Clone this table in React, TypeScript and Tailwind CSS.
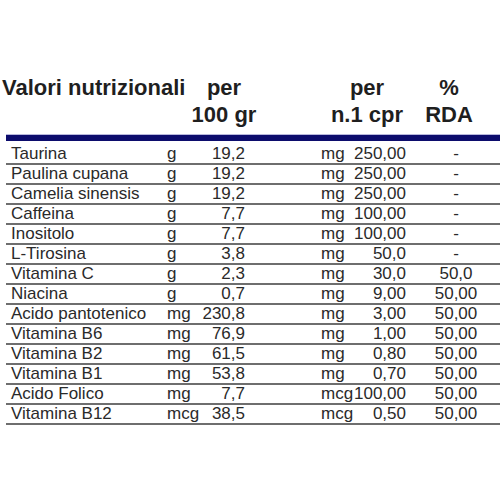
import React from "react";

type Row = [string, string, string, string, string, string];

const rows: Row[] = [
  ["Taurina", "g", "19,2", "mg", "250,00", "-"],
  ["Paulina cupana", "g", "19,2", "mg", "250,00", "-"],
  ["Camelia sinensis", "g", "19,2", "mg", "250,00", "-"],
  ["Caffeina", "g", "7,7", "mg", "100,00", "-"],
  ["Inositolo", "g", "7,7", "mg", "100,00", "-"],
  ["L-Tirosina", "g", "3,8", "mg", "50,0", "-"],
  ["Vitamina C", "g", "2,3", "mg", "30,0", "50,0"],
  ["Niacina", "g", "0,7", "mg", "9,00", "50,00"],
  ["Acido pantotenico", "mg", "230,8", "mg", "3,00", "50,00"],
  ["Vitamina B6", "mg", "76,9", "mg", "1,00", "50,00"],
  ["Vitamina B2", "mg", "61,5", "mg", "0,80", "50,00"],
  ["Vitamina B1", "mg", "53,8", "mg", "0,70", "50,00"],
  ["Acido Folico", "mg", "7,7", "mcg", "100,00", "50,00"],
  ["Vitamina B12", "mcg", "38,5", "mcg", "0,50", "50,00"],
];

export default function App() {
  return (
    <div
      className="w-[500px] h-[500px] bg-white overflow-hidden"
      style={{ fontFamily: '"Liberation Sans", Arial, sans-serif' }}
    >
      <div className="pt-[74px] grid grid-cols-[190px_68px_64px_90px_74px] text-[22px] leading-[27px] font-bold text-[#1f1f1f]">
        <div className="pl-[2px] whitespace-nowrap">Valori nutrizionali</div>
        <div className="text-center whitespace-nowrap">
          per
          <br />
          100 gr
        </div>
        <div />
        <div className="text-center whitespace-nowrap">
          per
          <br />
          n.1 cpr
        </div>
        <div className="text-center whitespace-nowrap">
          %
          <br />
          RDA
        </div>
      </div>
      <div className="mt-[6px] ml-[6px] h-[7px] bg-[#0c0c6c] border-t border-[#b8b8dc]" />
      <div className="mt-[4px] ml-[6px] text-[17px] leading-[18px] text-[#2a2a2a]">
        {rows.map((r) => (
          <div
            key={r[0]}
            className="grid grid-cols-[161px_33px_45px_76px_32px_53px_1fr] h-[20px] border-b-2 border-[#6e6e6e] whitespace-nowrap"
          >
            <div className="pl-[5px]">{r[0]}</div>
            <div>{r[1]}</div>
            <div className="text-right">{r[2]}</div>
            <div />
            <div>{r[3]}</div>
            <div className="text-right">{r[4]}</div>
            <div className="text-center pl-[6px]">{r[5]}</div>
          </div>
        ))}
      </div>
    </div>
  );
}
